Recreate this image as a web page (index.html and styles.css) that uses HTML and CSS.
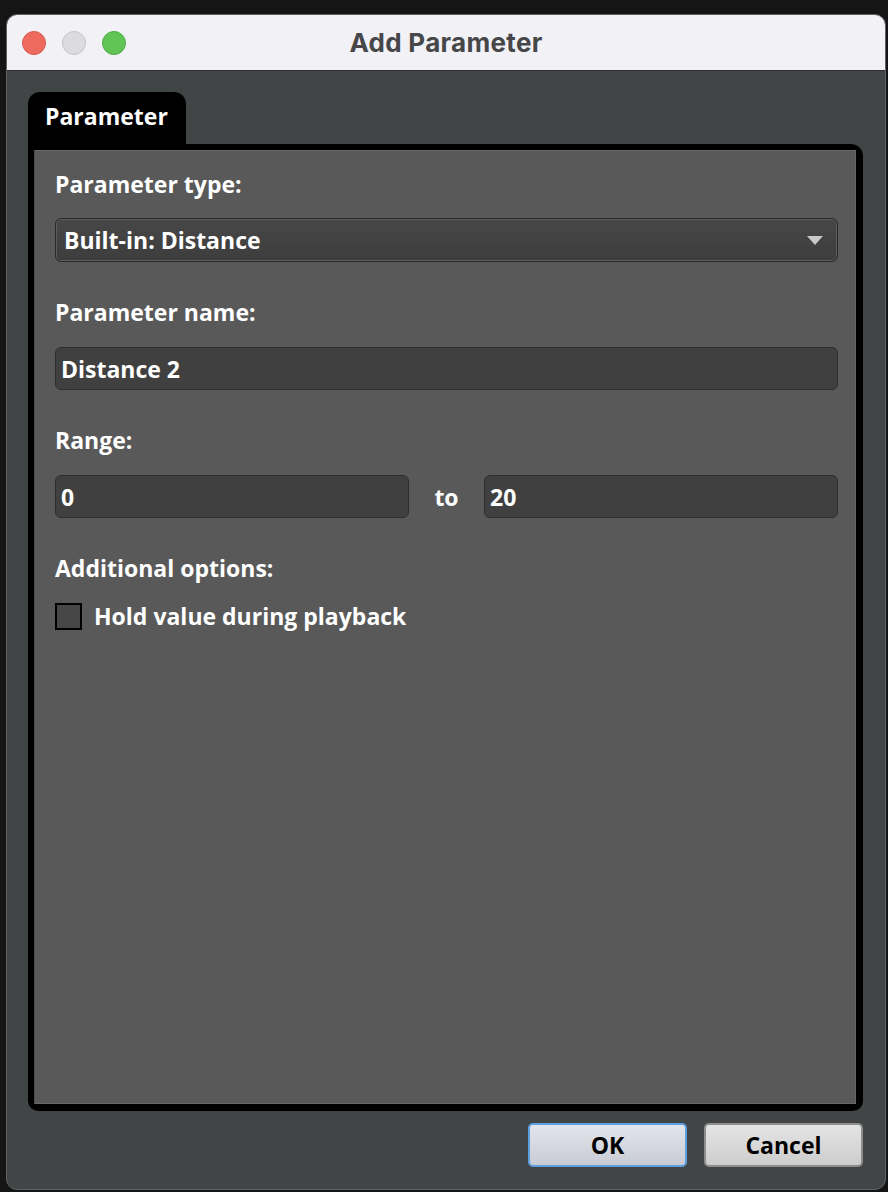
FILE: index.html
```html
<!DOCTYPE html>
<html>
<head>
<meta charset="utf-8">
<link rel="stylesheet" href="styles.css">
</head>
<body>
<div class="window">
  <div class="titlebar">
    <div class="lights">
      <span class="light red"></span>
      <span class="light gray"></span>
      <span class="light green"></span>
    </div>
    <div class="title">Add Parameter</div>
  </div>
  <div class="content">
    <div class="tab">Parameter</div>
    <div class="panel">
      <div class="inner">
        <div class="label first">Parameter type:</div>
        <div class="combo">
          <span>Built-in: Distance</span>
          <svg class="arrow" width="16" height="9" viewBox="0 0 16 9"><polygon points="0,0 16,0 8,9" fill="#c8c8c8"/></svg>
        </div>
        <div class="label">Parameter name:</div>
        <div class="field">Distance 2</div>
        <div class="label">Range:</div>
        <div class="range">
          <div class="field">0</div>
          <span class="to">to</span>
          <div class="field">20</div>
        </div>
        <div class="label">Additional options:</div>
        <div class="check">
          <span class="box"></span>
          <span>Hold value during playback</span>
        </div>
      </div>
    </div>
    <div class="buttons">
      <button class="btn ok">OK</button>
      <button class="btn cancel">Cancel</button>
    </div>
  </div>
</div>
</body>
</html>
```
FILE: styles.css
```css
html, body {
  margin: 0;
  padding: 0;
}
body {
  background: #151515;
  width: 888px;
  height: 1192px;
  overflow: hidden;
  font-family: "Open Sans", "Noto Sans", sans-serif;
}
.window {
  margin: 14px 0 0 6px;
  width: 878px;
  height: 1174px;
  border: 1px solid #5e6264;
  border-radius: 11px;
  background: #414546;
  overflow: hidden;
  display: flex;
  flex-direction: column;
}
.titlebar {
  height: 55px;
  background: #f1f1f6;
  border-bottom: 1px solid #2c2f30;
  position: relative;
  display: flex;
  align-items: center;
}
.lights {
  display: flex;
  gap: 16px;
  margin-left: 15px;
}
.light {
  width: 22px;
  height: 22px;
  border-radius: 50%;
  border: 1px solid rgba(0,0,0,0.12);
}
.red { background: #ee6a5f; border-color: #d55a50; }
.gray { background: #dcdce0; border-color: #c4c4c8; }
.green { background: #60c554; border-color: #4eab44; }
.title {
  position: absolute;
  left: 0;
  right: 0;
  top: 0;
  bottom: 0;
  display: flex;
  align-items: center;
  justify-content: center;
  font-family: "Inter", "Open Sans", sans-serif;
  font-weight: 700;
  font-size: 26px;
  letter-spacing: 0.3px;
  color: #474749;
  padding-bottom: 1px;
}
.content {
  flex: 1;
  padding: 21px 22px 0 21px;
  display: flex;
  flex-direction: column;
}
.tab {
  align-self: flex-start;
  width: 158px;
  height: 52px;
  background: #000;
  border-radius: 12px 12px 0 0;
  color: #fff;
  font-weight: 700;
  font-size: 23px;
  box-sizing: border-box;
  padding: 8px 0 0 17px;
}
.panel {
  height: 967px;
  background: #000;
  border-radius: 0 12px 10px 10px;
  padding: 6px 7px 7px 6px;
  box-sizing: border-box;
}
.inner {
  height: 100%;
  box-sizing: border-box;
  background: #595959;
  border: 1px solid #686868;
  border-left-color: #4a4a4a;
  padding: 15px 17px 0 20px;
  color: #fff;
  font-weight: 700;
  font-size: 23px;
}
.label {
  height: 30px;
  line-height: 30px;
  margin-top: 35px;
  margin-bottom: 20px;
}
.label.first { margin-top: 3px; margin-bottom: 19px; }
.combo {
  height: 44px;
  box-sizing: border-box;
  border: 1px solid #2a2a2a;
  border-radius: 6px;
  background: linear-gradient(#474747, #3d3d3d);
  box-shadow: inset 0 0 0 1px #5c5c5c;
  display: flex;
  align-items: center;
  justify-content: space-between;
  padding: 0 14px 0 8px;
}
.arrow { display: block; margin-top: 1px; }
.field {
  height: 43px;
  box-sizing: border-box;
  border: 1px solid #2e2e2e;
  border-radius: 6px;
  background: #404040;
  display: flex;
  align-items: center;
  padding: 0 5px;
}
.range {
  display: flex;
  align-items: center;
}
.range .field { flex: 1; }
.to {
  width: 75px;
  text-align: center;
}
.check {
  display: flex;
  align-items: center;
  gap: 12px;
  margin-top: -3px;
}
.box {
  width: 27px;
  height: 27px;
  box-sizing: border-box;
  border: 2px solid #000;
  background: #474747;
}
.buttons {
  display: flex;
  justify-content: flex-end;
  gap: 17px;
  margin-top: 12px;
}
.btn {
  width: 159px;
  height: 44px;
  border-radius: 5px;
  font-family: "Open Sans", "Noto Sans", sans-serif;
  font-weight: 700;
  font-size: 23px;
  color: #000;
  padding: 0;
}
.ok {
  border: 2px solid #5e9fe0;
  background: linear-gradient(#e2e5ec, #c9ccd4);
}
.cancel {
  border: 2px solid #8d8d8d;
  background: linear-gradient(#e4e4e4, #cdcdcd);
}
```
